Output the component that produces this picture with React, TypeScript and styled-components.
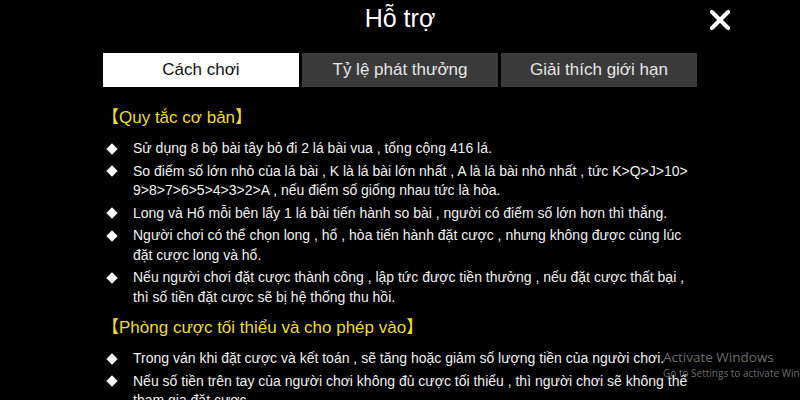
import styled, { createGlobalStyle } from 'styled-components';

const GlobalStyle = createGlobalStyle`
  html, body {
    margin: 0;
    padding: 0;
    background: #000;
  }
  body {
    font-family: "Liberation Sans", Arial, "Noto Sans CJK SC", sans-serif;
  }
`;

const Page = styled.div`
  position: relative;
  width: 800px;
  height: 400px;
  overflow: hidden;
  background: #000;
  color: #f2f2f2;
`;

const Header = styled.div`
  display: grid;
  grid-template-columns: 1fr auto 1fr;
  align-items: center;
  height: 36px;
`;

const Title = styled.h1`
  grid-column: 2;
  margin: 0;
  font-size: 25px;
  font-weight: normal;
  line-height: 36px;
  color: #fff;
`;

const CloseButton = styled.button`
  grid-column: 3;
  justify-self: end;
  margin: 4px 70px 0 0;
  padding: 0;
  width: 20px;
  height: 20px;
  border: none;
  background: none;
  cursor: pointer;
  display: flex;
`;

const Tabs = styled.div`
  display: flex;
  justify-content: center;
  gap: 3px;
  margin-top: 17px;
`;

const Tab = styled.div<{ $active?: boolean }>`
  width: 196px;
  height: 34px;
  display: flex;
  align-items: center;
  justify-content: center;
  font-size: 17px;
  background: ${(p) => (p.$active ? '#fff' : '#3a3a3a')};
  color: ${(p) => (p.$active ? '#111' : '#e6e6e6')};
`;

const Content = styled.div`
  padding: 20px 0 0 102px;
`;

const SectionTitle = styled.h2`
  margin: 0 0 10px;
  font-size: 17px;
  font-weight: normal;
  line-height: 22px;
  color: #eedc2a;
  white-space: nowrap;
`;

const List = styled.ul`
  list-style: none;
  margin: 0 0 10px;
  padding: 0 0 0 4px;
  display: flex;
  flex-direction: column;
  gap: 3px;
`;

const Item = styled.li`
  display: grid;
  grid-template-columns: 27px auto;
  font-size: 14px;
  line-height: 19.5px;
  white-space: nowrap;
  color: #f0f0f0;
`;

const Bullet = styled.span`
  display: flex;
  align-items: center;
  height: 19.5px;
  padding-left: 2px;
  &::before {
    content: '';
    width: 8px;
    height: 8px;
    background: #fff;
    transform: rotate(45deg);
  }
`;

const Watermark = styled.div`
  position: absolute;
  left: 663px;
  top: 348px;
  color: rgba(200, 200, 200, 0.55);
  font-family: "Open Sans", "Noto Sans", sans-serif;
  white-space: nowrap;
  pointer-events: none;
`;

const WatermarkTitle = styled.div`
  font-size: 13.5px;
  line-height: 18px;
`;

const WatermarkHint = styled.div`
  font-size: 10px;
  line-height: 14px;
`;

const basics = [
  ['Sử dụng 8 bộ bài tây bỏ đi 2 lá bài vua , tổng cộng 416 lá.'],
  [
    'So điểm số lớn nhỏ của lá bài , K là lá bài lớn nhất , A là lá bài nhỏ nhất , tức K>Q>J>10>',
    '9>8>7>6>5>4>3>2>A , nếu điểm số giống nhau tức là hòa.',
  ],
  ['Long và Hổ mỗi bên lấy 1 lá bài tiến hành so bài , người có điểm số lớn hơn thì thắng.'],
  [
    'Người chơi có thể chọn long , hổ , hòa tiến hành đặt cược , nhưng không được cùng lúc',
    'đặt cược long và hổ.',
  ],
  [
    'Nếu người chơi đặt cược thành công , lập tức được tiền thưởng , nếu đặt cược thất bại ,',
    'thì số tiền đặt cược sẽ bị hệ thống thu hồi.',
  ],
];

const limits = [
  ['Trong ván khi đặt cược và kết toán , sẽ tăng hoặc giảm số lượng tiền của người chơi.'],
  [
    'Nếu số tiền trên tay của người chơi không đủ cược tối thiểu , thì người chơi sẽ không thể',
    'tham gia đặt cược.',
  ],
];

const Rules = ({ items }: { items: string[][] }) => (
  <List>
    {items.map((lines, i) => (
      <Item key={i}>
        <Bullet />
        <span>
          {lines.map((l, j) => (
            <div key={j}>{l}</div>
          ))}
        </span>
      </Item>
    ))}
  </List>
);

const App = () => {
  return (
    <Page>
      <GlobalStyle />
      <Header>
        <Title>Hỗ trợ</Title>
        <CloseButton aria-label="close">
          <svg width="20" height="20" viewBox="0 0 20 20">
            <path d="M2 2 L18 18 M18 2 L2 18" stroke="#fff" strokeWidth="4" strokeLinecap="round" />
          </svg>
        </CloseButton>
      </Header>
      <Tabs>
        <Tab $active>Cách chơi</Tab>
        <Tab>Tỷ lệ phát thưởng</Tab>
        <Tab>Giải thích giới hạn</Tab>
      </Tabs>
      <Content>
        <SectionTitle>【Quy tắc cơ bản】</SectionTitle>
        <Rules items={basics} />
        <SectionTitle>【Phòng cược tối thiểu và cho phép vào】</SectionTitle>
        <Rules items={limits} />
      </Content>
      <Watermark>
        <WatermarkTitle>Activate Windows</WatermarkTitle>
        <WatermarkHint>Go to Settings to activate Windows.</WatermarkHint>
      </Watermark>
    </Page>
  );
};

export default App;
